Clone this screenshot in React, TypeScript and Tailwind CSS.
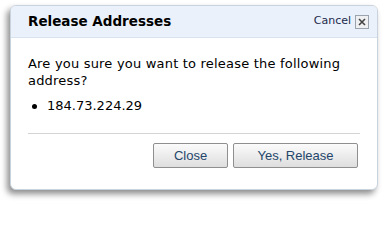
export default function App() {
  return (
    <div className="w-[390px] h-[208px] bg-white pt-[5px] pl-[10px]" style={{ fontFamily: '"DejaVu Sans", Verdana, sans-serif' }}>
      <div className="w-[368px] h-[185px] bg-white rounded-[6px] border border-[#c9d3de] shadow-[-3px_4px_6px_rgba(0,0,0,0.45)] overflow-hidden flex flex-col">
        {/* Header */}
        <div className="h-[32px] bg-[#eaf1fb] border-b border-[#d9e3ef] flex items-center justify-between pl-[17px] pr-[8px]">
          <h1 className="text-[13.5px] font-bold text-black">Release Addresses</h1>
          <div className="flex items-center gap-[4px]">
            <span className="text-[11px] text-[#1a2a4a]">Cancel</span>
            <span className="w-[14px] h-[14px] border border-[#9aa4ae] bg-[#eef0f2] flex items-center justify-center">
              <svg width="8" height="8" viewBox="0 0 8 8">
                <path d="M1 1L7 7M7 1L1 7" stroke="#444" strokeWidth="1.6" />
              </svg>
            </span>
          </div>
        </div>

        {/* Body */}
        <div className="px-[17px] pt-[17px]">
          <p className="text-[13px] leading-[17px] tracking-[0.2px] text-black">
            Are you sure you want to release the following address?
          </p>
          <div className="flex items-center gap-[10px] mt-[9px] pl-[4px] text-[13px] leading-[16px] text-black">
            <span className="w-[5px] h-[5px] rounded-full bg-black" />
            <span>184.73.224.29</span>
          </div>
          <div className="mt-[19px] h-px bg-[#d4d4d4]" />
          <div className="flex justify-end gap-[5px] mt-[9px] pr-[2px]" style={{ fontFamily: '"Liberation Sans", Arial, sans-serif' }}>
            <button className="w-[75px] h-[25px] border border-[#8f8f8f] rounded-[2px] bg-gradient-to-b from-[#fbfbfb] to-[#dedede] text-[13px] text-[#24466b]">
              Close
            </button>
            <button className="w-[125px] h-[25px] border border-[#8f8f8f] rounded-[2px] bg-gradient-to-b from-[#fbfbfb] to-[#dedede] text-[13px] text-[#24466b]">
              Yes, Release
            </button>
          </div>
        </div>
      </div>
    </div>
  );
}
